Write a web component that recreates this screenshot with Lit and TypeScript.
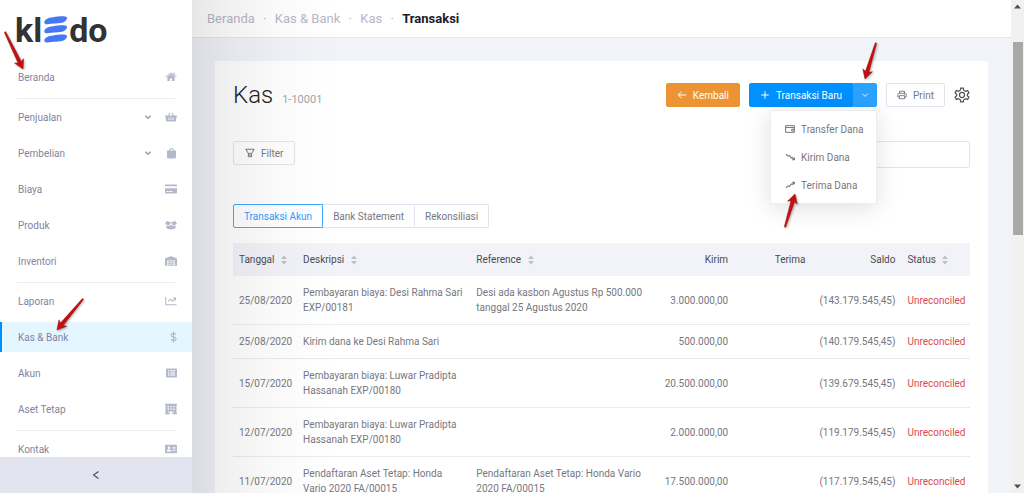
import { LitElement, html, svg, css, nothing, TemplateResult } from "lit";
import { customElement, property } from "lit/decorators.js";
import { classMap } from "lit/directives/class-map.js";

/* ---------- icons ---------- */

const solid: Record<string, TemplateResult> = {
  home: svg`<path d="M12 5.6 4.6 11.7V19c0 .5.3.8.8.8h4.4V15h4.4v4.800h4.400c.5 0 .8-.3.8-.8v-7.300z"/><path d="M.6 11.600 11.300 2.800a1.100 1.100 0 0 1 1.400 0L16.500 5.900V3.600h2.800v4.600l4.100 3.400-1 1.300L12 4.400 1.600 12.900z"/>`,
  basket: svg`<path fill-rule="evenodd" d="M1 9h4.600l4-6.200 1.700 1.100L8.100 9h7.800l-3.200-5.100 1.700-1.100 4 6.200H23c.6 0 1 .4 1 1v1.200c0 .4-.4.8-1 .8l-1.300 8c-.1.700-.8 1.200-1.500 1.200H3.800c-.7 0-1.400-.5-1.500-1.200L1 12c-.6 0-1-.4-1-.8V10c0-.6.4-1 1-1zm6 4v5h1.500v-5zm4.200 0v5h1.600v-5zm4.300 0v5H17v-5z"/>`,
  bag: svg`<path fill-rule="evenodd" d="M8 7a5 5 0 0 1 10 0h4v13a3 3 0 0 1-3 3H7a3 3 0 0 1-3-3V7zm2.200 0h5.600a2.800 2.800 0 0 0-5.600 0z"/>`,
  card: svg`<path fill-rule="evenodd" d="M0 5c0-1 .8-1.800 1.800-1.800h20.400c1 0 1.800.8 1.800 1.800v1.600H0zm0 5.400h24V19c0 1-.8 1.800-1.800 1.800H1.800C.8 20.800 0 20 0 19zm3 5.600v2h4.500v-2zm6 0v2h6v-2z"/>`,
  box: svg`<path d="M12 6.500 3.200 4.200.2 9.600c-.2.400 0 .8.400.9l7.200 1.800c.4.100.8 0 1-.4zM12 6.500l8.800-2.300 3 5.400c.2.400 0 .8-.4.900l-7.200 1.800c-.4.100-.8 0-1-.4z"/><path d="M3 12.600v5c0 .9.600 1.600 1.400 1.800l7 1.600c.4.100.8.100 1.200 0l7-1.600c.8-.2 1.400-.9 1.400-1.800v-5l-5 1.300c-.8.200-1.700-.1-2.100-.8L12 10.800l-1.900 2.300c-.4.700-1.300 1-2.100.8z"/>`,
  warehouse: svg`<path fill-rule="evenodd" d="M0 8.200c0-.7.400-1.300 1-1.600l10.200-4.200c.5-.2 1.100-.2 1.600 0L23 6.600c.6.300 1 .9 1 1.600V21.500h-4V10.300H4V21.500H0zM5 11.400h14v2.300H5zm0 3.800h14v2.500H5zm0 4h14v2.300H5z"/>`,
  chart: svg`<path d="M2.600 4v14.400H23v2.200H.5V4zM22 5.200v5.200c0 .6-.7.900-1.100.5l-1.400-1.400-4.600 4.600-4-4-3.700 3.600L5.700 12.200l5.200-5.200 4 4 3-3-1.300-1.300c-.5-.5-.1-1.500.5-1.500z"/>`,
  list: svg`<path fill-rule="evenodd" d="M3.700 3h18c1.300 0 2.300 1 2.300 2v14c0 1-1 2-2.300 2h-18C2.600 21 2 20 2 19V5c0-1 .6-2 1.700-2zM6 6.500v2.500h2.500V6.500zm4.500.2v2H20v-2zM6 10.800v2.500h2.500v-2.500zm4.500.2v2H20v-2zM6 15v2.500h2.500V15zm4.500.2v2H20v-2z"/>`,
  hotel: svg`<path fill-rule="evenodd" d="M0 1.500h24v2.600h-1V20h1v2.500H14.500V19a2.500 2.500 0 0 0-5 0v3.500H0V20h1V4.100H0zM5 6v2.500h3V6zm5.500 0v2.500h3V6zM16 6v2.500h3V6zM5 11v2.500h3V11zm5.500 0v2.500h3V11zM16 11v2.500h3V11zM6 17h3v2H6zm9 0h3v2h-3z"/>`,
  contact: svg`<path fill-rule="evenodd" d="M2 3.500h20c1.100 0 2 .9 2 2v13c0 1.100-.9 2-2 2H2c-1.100 0-2-.9-2-2v-13c0-1.100.9-2 2-2zM8 7a2.500 2.500 0 1 0 0 5 2.500 2.500 0 0 0 0-5zM3.500 17h9c0-2.500-1.500-4-3-4h-3c-1.500 0-3 1.500-3 4zM15 8v1.600h6V8zm0 3v1.600h6V11zm0 3v1.600h6V14z"/>`,
};

const outline: Record<string, TemplateResult> = {
  dollar: svg`<path stroke-width="2.400" d="M17 1v22M22 7.500C21 5.500 19 4.800 17 4.800c-2.800 0-4.700 1.400-4.700 3.500 0 4.800 9.700 2.400 9.700 7.300 0 2.200-2 3.700-5 3.700-2.300 0-4.300-1-5-3"/>`,
  down: svg`<path stroke-width="2.600" d="m4 8 8 8 8-8"/>`,
  expand: svg`<path stroke-width="4" d="m4 8 8 8 8-8"/>`,
  left: svg`<path stroke-width="2.600" d="M18 3.500 6 12l12 8.500"/>`,
  back: svg`<path stroke-width="2.400" d="M22 12H3M11 4l-8 8 8 8"/>`,
  plus: svg`<path stroke-width="2.400" d="M12 3v18M3 12h18"/>`,
  filter: svg`<path stroke-width="2.400" d="M2 3h20l-6 10H8zM8 13v8h8V13M8 17h8"/>`,
  print: svg`<path stroke-width="2.200" d="M6 8V3h12v5M6 17H2V10c0-1 .9-2 2-2h16c1.100 0 2 1 2 2v7h-4M6 13.500h12V21H6z"/><path stroke-width="2" d="M17 10.800h1.500"/>`,
  wallet: svg`<path stroke-width="2.400" d="M1.500 4h21v16h-21zM1.500 8.500h21M22 12.500h-6v4h6"/>`,
  fall: svg`<path stroke-width="2.600" d="m2 5 5.500 5 3-1.500 4.500 6 2.500-1.500 4 4.500M22.500 13v5.500H17"/>`,
  rise: svg`<path stroke-width="2.600" d="m2 19 5.500-5 3 1.500 4.500-6 2.500 1.500 4-4.500M22.500 11V5.500H17"/>`,
  gear: svg`<path stroke-width="1.800" d="m9.500 4.800.6-3.100h3.800l.6 3.100 3 1.700 3-1.100 1.900 3.300-2.400 2.100v2.400l2.400 2.100-1.900 3.300-3-1.100-3 1.700-.6 3.100h-3.800l-.6-3.100-3-1.700-3 1.100-1.900-3.300L4 13.200v-2.400L1.600 8.700l1.900-3.300 3 1.100z"/><circle stroke-width="1.800" cx="12" cy="12" r="3.800"/>`,
};

const icon = (name: string, size = "") => {
  const fill = name in solid;
  return html`<svg
    class="icon ${size} ${fill ? "fill" : "line"}"
    viewBox="0 0 24 24"
    aria-hidden="true"
  >
    ${fill ? solid[name] : outline[name]}
  </svg>`;
};

/* Red pointer whose tip sits on the origin and whose tail ends at (dx, dy). */
const pointer = (place: string, dx: number, dy: number) => {
  const length = Math.hypot(dx, dy);
  const angle = (Math.atan2(-dy, -dx) * 180) / Math.PI;
  return html`<svg class="pointer ${place}" aria-hidden="true">
    <path
      transform="rotate(${angle})"
      d="M0 0 L-9 -5 L-7.500 -1.800 L${-length} -.7 V.7 L-7.500 1.800 L-9 5 Z"
    />
  </svg>`;
};

const iconStyles = css`
  .icon {
    width: 12px;
    height: 12px;
    flex: none;
    display: block;
  }
  .icon.tiny {
    width: 8px;
    height: 8px;
  }
  .icon.small {
    width: 10px;
    height: 10px;
  }
  .icon.large {
    width: 16px;
    height: 16px;
  }
  .fill {
    fill: currentColor;
  }
  .line {
    fill: none;
    stroke: currentColor;
  }
  .pointer {
    position: absolute;
    width: 1px;
    height: 1px;
    overflow: visible;
    z-index: 5;
    pointer-events: none;
    fill: #cc0c0c;
    stroke: #8f1515;
    stroke-width: 0.5;
    filter: drop-shadow(1px 1px 1px rgba(0, 0, 0, 0.3));
  }
`;

/* ---------- sidebar ---------- */

interface MenuItem {
  label: string;
  icon: string;
  open?: boolean;
  active?: boolean;
  mark?: TemplateResult;
}

const menu: MenuItem[][] = [
  [{ label: "Beranda", icon: "home", mark: pointer("to-home", -18, -37) }],
  [
    { label: "Penjualan", icon: "basket", open: true },
    { label: "Pembelian", icon: "bag", open: true },
    { label: "Biaya", icon: "card" },
    { label: "Produk", icon: "box" },
    { label: "Inventori", icon: "warehouse" },
  ],
  [
    { label: "Laporan", icon: "chart" },
    { label: "Kas & Bank", icon: "dollar", active: true, mark: pointer("to-bank", 26, -31) },
    { label: "Akun", icon: "list" },
    { label: "Aset Tetap", icon: "hotel" },
  ],
  [{ label: "Kontak", icon: "contact" }],
];

@customElement("side-menu")
class SideMenu extends LitElement {
  static styles = [
    iconStyles,
    css`
      :host {
        display: flex;
        flex-direction: column;
        background: #fff;
        color: #8583a0;
      }
      .logo {
        display: flex;
        align-items: center;
        height: 59px;
        flex: none;
        padding-left: 15px;
        font: 700 34px/58px Roboto, sans-serif;
        color: #333;
      }
      .logo svg {
        width: 24px;
        height: 27px;
        margin: 0 1px 0 2px;
        fill: #4678f5;
      }
      nav {
        flex: 1;
        min-height: 0;
      }
      ul {
        list-style: none;
        margin: 0;
        padding: 0;
      }
      ul + ul::before {
        content: "";
        display: block;
        height: 1px;
        margin: 3px 17px 0;
        background: #ececf0;
      }
      li {
        position: relative;
        padding: 3px 0;
      }
      a {
        display: flex;
        align-items: center;
        gap: 13px;
        height: 30px;
        padding: 0 15px 0 18px;
        color: inherit;
        text-decoration: none;
      }
      a.active {
        background: #e4f6ff;
        box-shadow: inset 2px 0 #0090ff;
      }
      .label {
        flex: 1;
      }
      .icon {
        color: #b4b8cb;
      }
      .icon.tiny {
        color: #9a9aac;
      }
      .collapse {
        display: flex;
        align-items: center;
        justify-content: center;
        height: 36px;
        flex: none;
        position: relative;
        z-index: 1;
        border: 0;
        background: #e2e5ef;
      }
      .collapse .icon {
        color: #4a4a60;
      }
      .to-home {
        left: 23px;
        top: 10px;
      }
      .to-bank {
        left: 57px;
        top: 11px;
      }
    `,
  ];

  render() {
    return html`
      <div class="logo">
        <span>kl</span>
        <svg viewBox="0 0 24 27" aria-hidden="true">
          <path
            d="M1 4.500C3 1.800 7 1.500 14 .5c4-.6 8-.5 9 1 .6 1.500-2 4.500-5 5.300C13 8 8 7.200 3.500 8.200 1 8.800-.8 6.500 1 4.500zM1 13.500c2-2.700 6-3 13-4 4-.6 8-.5 9 1 .6 1.500-2 4.500-5 5.300-5 1.200-10 .4-14.500 1.400C1 17.800-.8 15.500 1 13.500zM1 22.800c2-2.700 6-3 13-4 4-.6 8-.5 9 1 .6 1.500-2 4.500-5 5.300-5 1.200-10 .4-14.500 1.400C1 27-.8 24.800 1 22.800z"
          />
        </svg>
        <span>do</span>
      </div>
      <nav>
        ${menu.map(
          (group) => html`<ul>
            ${group.map(
              (item) => html`<li>
                <a href="#" class=${classMap({ active: !!item.active })}>
                  <span class="label">${item.label}</span>
                  ${item.open ? icon("expand", "tiny") : nothing} ${icon(item.icon)}
                </a>
                ${item.mark ?? nothing}
              </li>`
            )}
          </ul>`
        )}
      </nav>
      <button class="collapse" aria-label="Collapse menu">${icon("left", "small")}</button>
    `;
  }
}

/* ---------- transactions table ---------- */

interface Row {
  date: string;
  text: string;
  ref?: string;
  out: string;
  balance: string;
}

const rows: Row[] = [
  {
    date: "25/08/2020",
    text: "Pembayaran biaya: Desi Rahma Sari EXP/00181",
    ref: "Desi ada kasbon Agustus Rp 500.000 tanggal 25 Agustus 2020",
    out: "3.000.000,00",
    balance: "(143.179.545,45)",
  },
  { date: "25/08/2020", text: "Kirim dana ke Desi Rahma Sari", out: "500.000,00", balance: "(140.179.545,45)" },
  {
    date: "15/07/2020",
    text: "Pembayaran biaya: Luwar Pradipta Hassanah EXP/00180",
    out: "20.500.000,00",
    balance: "(139.679.545,45)",
  },
  {
    date: "12/07/2020",
    text: "Pembayaran biaya: Luwar Pradipta Hassanah EXP/00180",
    out: "2.000.000,00",
    balance: "(119.179.545,45)",
  },
  {
    date: "11/07/2020",
    text: "Pendaftaran Aset Tetap: Honda Vario 2020 FA/00015",
    ref: "Pendaftaran Aset Tetap: Honda Vario 2020 FA/00015",
    out: "17.500.000,00",
    balance: "(117.179.545,45)",
  },
];

@customElement("transaction-table")
class TransactionTable extends LitElement {
  @property({ attribute: false }) rows: Row[] = [];

  static styles = css`
    :host {
      display: block;
    }
    table {
      width: 100%;
      table-layout: fixed;
      border-collapse: separate;
      border-spacing: 0;
    }
    .date {
      width: 8.7%;
    }
    .text {
      width: 23.5%;
    }
    .ref {
      width: 25.3%;
    }
    .money {
      width: 10.5%;
    }
    .balance {
      width: 12.2%;
    }
    th,
    td {
      padding: 9px 6px;
      text-align: left;
      line-height: 15px;
    }
    th {
      background: #f1f3f8;
      color: #4c4c55;
      white-space: nowrap;
      font-weight: 400;
    }
    td {
      border-bottom: 1px solid #ebebee;
    }
    .num {
      text-align: right;
    }
    .status {
      color: #dc4a4f;
    }
    .sort {
      width: 6px;
      height: 10px;
      margin-left: 4px;
      vertical-align: middle;
      fill: #bfbfc4;
    }
  `;

  private sorter() {
    return html`<svg class="sort" viewBox="0 0 6 10" aria-hidden="true">
      <path d="M0 4l3-3.500L6 4zM0 6l3 3.500L6 6z" />
    </svg>`;
  }

  render() {
    return html`<table>
      <colgroup>
        <col class="date" />
        <col class="text" />
        <col class="ref" />
        <col class="money" />
        <col class="money" />
        <col class="balance" />
        <col />
      </colgroup>
      <thead>
        <tr>
          <th>Tanggal ${this.sorter()}</th>
          <th>Deskripsi ${this.sorter()}</th>
          <th>Reference ${this.sorter()}</th>
          <th class="num">Kirim</th>
          <th class="num">Terima</th>
          <th class="num">Saldo</th>
          <th>Status ${this.sorter()}</th>
        </tr>
      </thead>
      <tbody>
        ${this.rows.map(
          (r) => html`<tr>
            <td>${r.date}</td>
            <td>${r.text}</td>
            <td>${r.ref ?? nothing}</td>
            <td class="num">${r.out}</td>
            <td></td>
            <td class="num">${r.balance}</td>
            <td class="status">Unreconciled</td>
          </tr>`
        )}
      </tbody>
    </table>`;
  }
}

/* ---------- application shell ---------- */

@customElement("app-root")
class AppRoot extends LitElement {
  static styles = [
    iconStyles,
    css`
      * {
        box-sizing: border-box;
      }
      :host {
        display: flex;
        height: 100vh;
        overflow: hidden;
        background: #f1f3f8;
        color: #77777e;
        font: 400 10px/15px Roboto, sans-serif;
      }
      side-menu {
        width: 192px;
        flex: none;
      }
      main {
        flex: 1;
        min-width: 0;
        overflow: hidden;
        position: relative;
      }
      /* Soft shade that the sidebar casts over the page. */
      main::before {
        content: "";
        position: absolute;
        inset: 0 auto 0 0;
        width: 150px;
        pointer-events: none;
        background: linear-gradient(
          to right,
          rgba(20, 20, 30, 0.1),
          rgba(20, 20, 30, 0.06) 25%,
          rgba(20, 20, 30, 0.025) 55%,
          rgba(20, 20, 30, 0.007) 80%,
          rgba(20, 20, 30, 0)
        );
      }
      .crumbs {
        display: flex;
        align-items: center;
        height: 38px;
        padding: 0 15px;
        background: #fff;
        border-bottom: 1px solid #e6e8ee;
        font-size: 13px;
        color: #b8b6c8;
      }
      .crumbs a {
        color: inherit;
        text-decoration: none;
      }
      .crumbs a::after {
        content: "·";
        display: inline-block;
        width: 20px;
        text-align: center;
      }
      .crumbs strong {
        font-weight: 700;
        color: #1c1a28;
      }
      .card {
        margin: 23px 23px 0;
        padding: 22px 18px;
        background: #fff;
      }
      .head,
      .tools,
      .actions,
      .tabs {
        display: flex;
      }
      .head {
        align-items: center;
        justify-content: space-between;
      }
      .title {
        display: flex;
        align-items: baseline;
        gap: 9px;
        color: #a3a3aa;
        font-size: 11px;
      }
      h1 {
        margin: 0;
        font-size: 24px;
        line-height: 24px;
        font-weight: 300;
        color: #222;
      }
      .actions {
        align-items: center;
        gap: 9px;
      }
      button {
        display: flex;
        align-items: center;
        justify-content: center;
        gap: 6px;
        height: 24px;
        margin: 0;
        padding: 0 10px;
        border: 1px solid #e1e4ee;
        border-radius: 2px;
        background: transparent;
        font: inherit;
        color: inherit;
        white-space: nowrap;
      }
      .back {
        border-color: #ec9434;
        background: #ec9434;
        color: #fff;
      }
      .split {
        position: relative;
        display: flex;
        color: #fff;
      }
      .split .new {
        border-color: #0090ff;
        background: #0090ff;
        border-radius: 2px 0 0 2px;
      }
      .split .more {
        width: 24px;
        padding: 0;
        border-color: #2aa3ff;
        background: #2aa3ff;
        border-radius: 0 2px 2px 0;
      }
      .options {
        position: absolute;
        right: 0;
        top: 27px;
        z-index: 3;
        width: 107px;
        margin: 0;
        padding: 4px 0;
        list-style: none;
        background: #fff;
        border: 1px solid #ededf0;
        border-radius: 2px;
        box-shadow: 0 4px 24px rgba(0, 0, 0, 0.13);
        color: #77777e;
      }
      .options button {
        width: 100%;
        height: 28px;
        justify-content: flex-start;
        padding: 0 0 0 14px;
        border: 0;
      }
      .gear {
        width: 16px;
        padding: 0;
        border: 0;
        color: #4f4f58;
      }
      .tools {
        justify-content: space-between;
        align-items: flex-start;
        margin-top: 34px;
      }
      .tools button {
        padding: 0 11px;
      }
      .tools input {
        width: 180px;
        height: 27px;
        padding: 0 8px;
        border: 1px solid #e1e4ee;
        border-radius: 2px;
        font: inherit;
        background: transparent;
      }
      .tabs {
        margin: 36px 0 15px;
      }
      .tabs button {
        border-left-width: 0;
        border-radius: 0;
      }
      .tabs button:last-child {
        border-radius: 0 2px 2px 0;
      }
      .tabs .on {
        border: 1px solid #3fa9ff;
        border-radius: 2px 0 0 2px;
        color: #2f9bff;
      }
      .scroll {
        display: flex;
        flex-direction: column;
        justify-content: space-between;
        align-items: center;
        width: 13px;
        flex: none;
        padding: 4px 0;
        background: #f1f1f1;
      }
      .scroll svg {
        width: 7px;
        height: 5px;
        fill: #505050;
      }
      .track {
        flex: 1;
        width: 10px;
        padding: 33px 0 4px;
      }
      .thumb {
        height: 44%;
        background: #a8a8a8;
      }
      .to-more {
        right: 11px;
        top: -4px;
      }
      .to-receive {
        right: 81px;
        top: 111px;
      }
    `,
  ];

  render() {
    return html`
      <side-menu></side-menu>
      <main>
        <nav class="crumbs" aria-label="Breadcrumb">
          <a href="#">Beranda</a>
          <a href="#">Kas &amp; Bank</a>
          <a href="#">Kas</a>
          <strong>Transaksi</strong>
        </nav>
        <section class="card">
          <header class="head">
            <div class="title">
              <h1>Kas</h1>
              <span>1-10001</span>
            </div>
            <div class="actions">
              <button class="back">${icon("back", "small")} Kembali</button>
              <div class="split">
                <button class="new">${icon("plus", "small")} Transaksi Baru</button>
                <button class="more" aria-label="More transactions">${icon("down", "tiny")}</button>
                <ul class="options">
                  <li><button>${icon("wallet", "small")} Transfer Dana</button></li>
                  <li><button>${icon("fall", "small")} Kirim Dana</button></li>
                  <li><button>${icon("rise", "small")} Terima Dana</button></li>
                </ul>
                ${pointer("to-more", 11, -36)} ${pointer("to-receive", -10, 33)}
              </div>
              <button>${icon("print", "small")} Print</button>
              <button class="gear" aria-label="Settings">${icon("gear", "large")}</button>
            </div>
          </header>
          <div class="tools">
            <button>${icon("filter", "small")} Filter</button>
            <input type="search" aria-label="Search" />
          </div>
          <div class="tabs">
            <button class="on">Transaksi Akun</button>
            <button>Bank Statement</button>
            <button>Rekonsiliasi</button>
          </div>
          <transaction-table .rows=${rows}></transaction-table>
        </section>
      </main>
      <div class="scroll" aria-hidden="true">
        <svg viewBox="0 0 7 5"><path d="M0 4.500 3.500.5 7 4.500z" /></svg>
        <div class="track"><div class="thumb"></div></div>
        <svg viewBox="0 0 7 5"><path d="M0 .5h7L3.500 4.500z" /></svg>
      </div>
    `;
  }
}
